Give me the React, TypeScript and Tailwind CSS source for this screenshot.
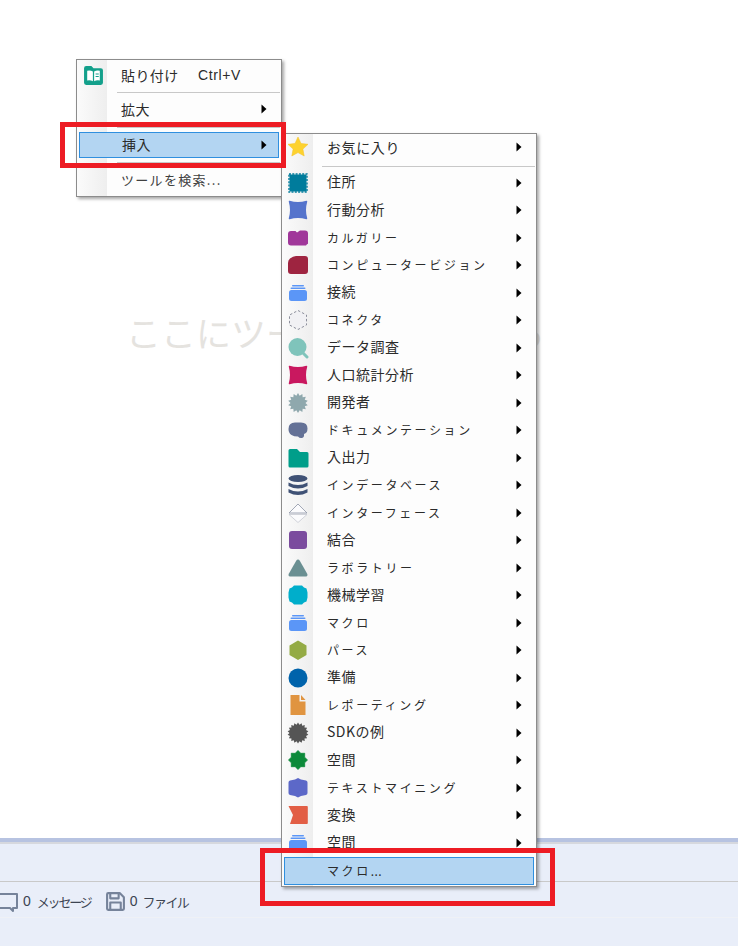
import React from "react";

const FONT = "font-['Noto_Sans_CJK_JP','Noto_Sans',sans-serif]";

// spiky round shapes (開発者, SDKの例, 空間)
function burst(n: number, outer: number, inner: number) {
  const pts: string[] = [];
  for (let i = 0; i < n * 2; i++) {
    const r = i % 2 === 0 ? outer : inner;
    const a = (Math.PI * i) / n;
    pts.push(`${(11 + r * Math.sin(a)).toFixed(2)},${(11 - r * Math.cos(a)).toFixed(2)}`);
  }
  return pts.join(" ");
}

function Stack() {
  return (
    <>
      <rect x="5" y="3" width="12" height="1.4" rx="0.7" fill="#5b96f7" />
      <rect x="3.5" y="5.5" width="15" height="1.6" rx="0.8" fill="#5b96f7" />
      <rect x="2" y="8" width="18" height="11" rx="2.5" fill="#5b96f7" />
    </>
  );
}

function Concave({ fill }: { fill: string }) {
  return <path d="M2.500 2.500Q11 5 19.500 2.500Q17 11 19.500 19.500Q11 17 2.500 19.500Q5 11 2.500 2.500Z" fill={fill} stroke={fill} strokeWidth="1.5" strokeLinejoin="round" />;
}

function ToolIcon({ kind }: { kind: string }) {
  let shape: React.ReactNode = null;
  switch (kind) {
    case "star":
      shape = <path d="M11 1l3 6.400 7 .9-5.100 4.800 1.300 6.900L11 16.600 4.800 20l1.300-6.900L1 8.300l7-.9z" fill="#fdd22f" stroke="#f4c020" strokeWidth="0.5" />;
      break;
    case "address":
      shape = (
        <>
          <rect x="2.500" y="2.500" width="17" height="17" fill="#007c9c" />
          <rect x="2" y="2" width="18" height="18" fill="none" stroke="#007c9c" strokeWidth="1.400" strokeDasharray="2 1.300" />
        </>
      );
      break;
    case "behavior":
      shape = <Concave fill="#5574cc" />;
      break;
    case "calgary":
      shape = <path d="M4 4h4.500l1.500 1.500L13 3.500h5q3 0 3 3v10q0 .8-1 .8l-1 1.200H4q-3 0-3-3V7q0-3 3-3z" fill="#a0379a" />;
      break;
    case "vision":
      shape = <path d="M9 2h9q3 0 3 3v12q0 3-3 3H4q-3 0-3-3V9q0-3 2-4.500Q6 2 9 2z" fill="#9e2440" />;
      break;
    case "stack":
      shape = <Stack />;
      break;
    case "connector":
      shape = <path d="M11 1.500L19.500 6v10L11 20.500 2.500 16V6z" fill="#f1f1f4" stroke="#8c8f9c" strokeWidth="1" strokeDasharray="2.500 2" />;
      break;
    case "search":
      shape = (
        <>
          <circle cx="10.500" cy="10" r="9" fill="#7fc4bb" />
          <path d="M16 16l4 4" stroke="#7fc4bb" strokeWidth="3" strokeLinecap="round" />
        </>
      );
      break;
    case "demographic":
      shape = <Concave fill="#c9185f" />;
      break;
    case "developer":
      shape = <polygon points={burst(14, 10, 7.5)} fill="#8fa8ad" />;
      break;
    case "doc":
      shape = <path d="M8 3.500h6q6.500 0 6.500 6 0 4.500-3.500 5.500.5 3.500-2 4-2.500.5-4-1.500Q7 17.500 4.500 16 1.500 14 1.500 10 1.500 3.500 8 3.500z" fill="#647196" />;
      break;
    case "folder":
      shape = <path d="M3 2h7l3 3h7q1.500 0 1.500 1.500V19q0 1.500-1.500 1.500H3q-1.500 0-1.500-1.500V3.500Q1.500 2 3 2z" fill="#009e8a" />;
      break;
    case "db":
      shape = (
        <>
          <ellipse cx="11" cy="4.500" rx="9.500" ry="3.500" fill="#3f5175" />
          <path d="M1.500 8.500q9.500 5 19 0V12q-9.500 5-19 0z" fill="#3f5175" />
          <path d="M1.500 15q9.500 5 19 0v3.500q-9.500 5-19 0z" fill="#3f5175" />
        </>
      );
      break;
    case "interface":
      shape = (
        <>
          <path d="M11 2L20 11H2z" fill="#fbfbfd" stroke="#8c93a4" strokeWidth="0.8" />
          <path d="M2 12.500h18L11 20.500z" fill="#fbfbfd" stroke="#c6c9d2" strokeWidth="0.8" />
        </>
      );
      break;
    case "join":
      shape = <rect x="2" y="2" width="18" height="18" rx="3" fill="#7b4c9e" />;
      break;
    case "lab":
      shape = <path d="M11 2.500q1 0 1.800 1.200l7.400 13q1 2.300-1.200 2.800H3q-2.200-.5-1.200-2.800l7.400-13Q10 2.500 11 2.500z" fill="#6a8f92" />;
      break;
    case "ml":
      shape = <path d="M7 1.500h8l2 2 2.500 1 1 4v5l-1 4-2.500 1-2 2H7l-2-2-2.500-1-1-4v-5l1-4 2.500-1z" fill="#00aecb" />;
      break;
    case "parse":
      shape = <path d="M11 1.500l8.500 5v9.500l-8.500 5-8.500-5V6.500z" fill="#94ab45" />;
      break;
    case "prep":
      shape = <circle cx="11" cy="11" r="9.500" fill="#0063ab" />;
      break;
    case "report":
      shape = (
        <>
          <path d="M3.500 1h9v6.500H18.500V21h-15z" fill="#e09440" />
          <path d="M14 1l4.500 5H14z" fill="#e09440" />
        </>
      );
      break;
    case "sdk":
      shape = <polygon points={burst(18, 10.5, 8.5)} fill="#555555" />;
      break;
    case "spatial":
      shape = <polygon points={burst(8, 9.5, 7.2)} fill="#0c8a3a" strokeLinejoin="round" stroke="#0c8a3a" strokeWidth="0.8" />;
      break;
    case "text":
      shape = <path d="M11 1l3 1.500 5 1q1.500.5 1.500 2v10.500q0 1.500-1.500 2l-5 1-3 1.500-3-1.500-5-1q-1.500-.5-1.500-2V5.500q0-1.500 1.500-2l5-1z" fill="#5c68c8" />;
      break;
    case "transform":
      shape = <path d="M1.500 2H20q.8 0 .8 1v16q0 1-.8 1H3l3-9z" fill="#e25e45" />;
      break;
  }
  return (
    <svg viewBox="0 0 22 22" className="w-[22px] h-[22px]">
      {shape}
    </svg>
  );
}

const tools = [
  { label: "住所", kind: "address" },
  { label: "行動分析", kind: "behavior" },
  { label: "カルガリー", kind: "calgary", kana: true },
  { label: "コンピュータービジョン", kind: "vision", kana: true },
  { label: "接続", kind: "stack" },
  { label: "コネクタ", kind: "connector", kana: true },
  { label: "データ調査", kind: "search" },
  { label: "人口統計分析", kind: "demographic" },
  { label: "開発者", kind: "developer" },
  { label: "ドキュメンテーション", kind: "doc", kana: true },
  { label: "入出力", kind: "folder" },
  { label: "インデータベース", kind: "db", kana: true },
  { label: "インターフェース", kind: "interface", kana: true },
  { label: "結合", kind: "join" },
  { label: "ラボラトリー", kind: "lab", kana: true },
  { label: "機械学習", kind: "ml" },
  { label: "マクロ", kind: "stack", kana: true },
  { label: "パース", kind: "parse", kana: true },
  { label: "準備", kind: "prep" },
  { label: "レポーティング", kind: "report", kana: true },
  { label: "SDKの例", kind: "sdk" },
  { label: "空間", kind: "spatial" },
  { label: "テキストマイニング", kind: "text", kana: true },
  { label: "変換", kind: "transform" },
  { label: "空間", kind: "stack" },
];

function Arrow() {
  return (
    <svg viewBox="0 0 6 10" className="w-[6px] h-[10px]">
      <path d="M0.500 0.500L5.500 5L0.500 9.500z" fill="#000000" />
    </svg>
  );
}

function TopMenu() {
  return (
    <div className="absolute left-[76px] top-[59px] w-[206px] h-[138px] bg-[#fdfdfd] border border-[#8c8c8c] shadow-[2px_2px_3px_rgba(0,0,0,0.35)] text-[14px] text-[#2b2b2b]">
      <div className="absolute left-0 top-0 bottom-0 w-[30px] bg-gradient-to-r from-[#fbfbfb] to-[#eeeeee]" />
      <div className="relative flex flex-col">
        <div className="h-[32px] flex items-center pb-[2px]">
          <div className="w-[32px] flex justify-center">
            <svg viewBox="0 0 20 20" className="w-[21px] h-[21px]">
              <path d="M1 3q0-2 2-2h5l2 2h7q2 0 2 2v12q0 2-2 2H3q-2 0-2-2z" fill="#13a08b" />
              <path d="M4 5.500q3-.8 5.400.7v9.300q-2.400-1.300-5.400-.7zM16 5.500q-3-.8-5.400.7v9.300q2.400-1.300 5.400-.7z" fill="#ffffff" />
              <path d="M12 8.500h3M12 11h3" stroke="#13a08b" strokeWidth="1" />
            </svg>
          </div>
          <span className="ml-[12px] w-[77px] tracking-[0.4px]">貼り付け</span>
          <span className="text-[14px] font-['Liberation_Sans',sans-serif] tracking-[0.6px]">Ctrl+V</span>
        </div>
        <div className="ml-[40px] mr-[1px] h-px bg-[#c8c8c8]" />
        <div className="h-[34px] flex items-center pl-[44px] pr-[14px] pb-[2px] justify-between">
          <span className="tracking-[0.4px]">拡大</span>
          <Arrow />
        </div>
        <div className="ml-[40px] mr-[1px] h-px bg-[#c8c8c8]" />
        <div className="mx-[2px] mt-[4px] h-[26px] flex items-center pl-[42px] pr-[11px] pb-[1px] justify-between bg-[#b3d5f2] border border-[#2f8fdf]">
          <span className="tracking-[0.4px]">挿入</span>
          <Arrow />
        </div>
        <div className="ml-[40px] mr-[1px] mt-[4px] h-px bg-[#c8c8c8]" />
        <div className="h-[33px] flex items-center pl-[44px] text-[13px] tracking-[1.3px] text-[#404040]">ツールを検索...</div>
      </div>
    </div>
  );
}

function SubMenu() {
  return (
    <div className="absolute left-[281px] top-[133px] w-[256px] h-[754px] bg-[#fdfdfd] border border-[#8c8c8c] shadow-[2px_2px_3px_rgba(0,0,0,0.35)] text-[14px] text-[#2b2b2b]">
      <div className="absolute left-0 top-0 bottom-0 w-[31px] bg-gradient-to-r from-[#fbfbfb] to-[#eeeeee]" />
      <div className="relative flex flex-col">
        <div className="h-[28px] flex items-center pr-[14px] pb-[2px]">
          <div className="w-[32px] flex justify-center">
            <ToolIcon kind="star" />
          </div>
          <span className="ml-[13px] flex-1 tracking-[0.6px]">お気に入り</span>
          <Arrow />
        </div>
        <div className="ml-[40px] mr-[1px] mt-[4px] h-px bg-[#c8c8c8]" />
        <div className="mt-[2px] flex flex-col">
          {tools.map((t, i) => (
            <div key={i} className="h-[27.5px] flex items-center pr-[14px] shrink-0">
              <div className="w-[32px] flex justify-center">
                <ToolIcon kind={t.kind} />
              </div>
              <span className={t.kana ? "ml-[13px] flex-1 text-[12px] tracking-[2.6px]" : "ml-[13px] flex-1 tracking-[0.5px] -translate-y-px"}>{t.label}</span>
              <Arrow />
            </div>
          ))}
        </div>
        <div className="mx-[2px] h-[28px] flex items-center pl-[42px] text-[12px] tracking-[2.6px] bg-[#b3d5f2] border border-[#2f8fdf]">
          マクロ<span className="tracking-[0.4px]">...</span>
        </div>
      </div>
    </div>
  );
}

export default function App() {
  return (
    <div className={`relative w-[738px] h-[946px] overflow-hidden bg-white flex flex-col ${FONT}`}>
      <div className="h-[838px] pt-[306px] pl-[126px] text-[35px] leading-[52px] text-[#e5e3df] whitespace-nowrap">ここにツールボックスから</div>
      <div className="h-[4px] bg-[#b7c3e1]" />
      <div className="h-[2px] bg-[#d6d8de]" />
      <div className="h-[38px] bg-[#e9eef9] border-b border-[#c9c9c9]" />
      <div className="h-[36px] bg-[#e9eef9] border-b border-[#eff1f6] flex items-center pt-[4px] text-[13px] text-[#3c4452]">
        <svg viewBox="0 0 20 20" className="w-[20px] h-[20px] -ml-px" fill="none" stroke="#76839a" strokeWidth="2" strokeLinejoin="round">
          <path d="M-2 2h20v14h-4v3l-3-3H-2z" />
        </svg>
        <span className="ml-[4px] text-[14px] font-['Liberation_Sans',sans-serif]">0</span>
        <span className="ml-[6px] tracking-[-2.200px] w-[62px]">メッセージ</span>
        <svg viewBox="0 0 20 20" className="w-[21px] h-[21px] ml-[6px]" fill="none" stroke="#76839a" strokeWidth="2" strokeLinejoin="round">
          <path d="M2 3q0-1 1-1h11l4 4v11q0 1-1 1H3q-1 0-1-1z" />
          <path d="M5 2v5h8V2M5 18v-7h10v7" />
        </svg>
        <span className="ml-[4px] text-[14px] font-['Liberation_Sans',sans-serif]">0</span>
        <span className="ml-[5px] tracking-[-1.600px]">ファイル</span>
      </div>
      <div className="flex-1 bg-[#e9eef9]" />

      <TopMenu />
      <SubMenu />

      {/* red callouts drawn over the screenshot */}
      <div className="absolute left-[60px] top-[122px] w-[226px] h-[46px] border-[5px] border-[#ed1c24]" />
      <div className="absolute left-[260px] top-[848px] w-[295px] h-[58px] border-[5px] border-[#ed1c24]" />
    </div>
  );
}
